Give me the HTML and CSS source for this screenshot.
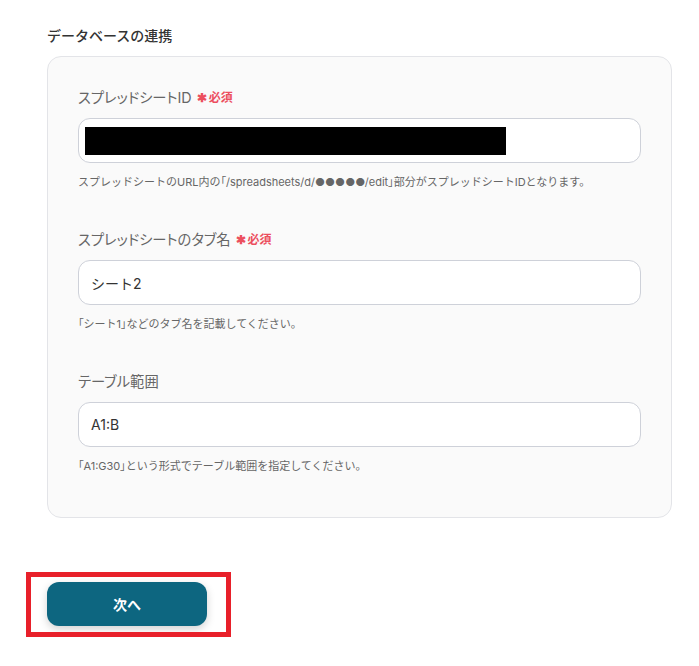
FILE: index.html
```html
<!DOCTYPE html>
<html lang="ja">
<head>
<meta charset="utf-8">
<link rel="stylesheet" href="styles.css">
</head>
<body>
<div class="page">
  <h2 class="section-title">データベースの連携</h2>
  <div class="card">
    <div class="field">
      <div class="label">スプレッドシートID<span class="req"><span class="star">✱</span>必須</span></div>
      <div class="input masked"><span class="mask"></span></div>
      <p class="help">スプレッドシートのURL内の<span class="br">「</span>/spreadsheets/d/●●●●●/edit<span class="br">」</span>部分がスプレッドシートIDとなります。</p>
    </div>
    <div class="field">
      <div class="label">スプレッドシートのタブ名<span class="req"><span class="star">✱</span>必須</span></div>
      <div class="input">シート2</div>
      <p class="help"><span class="br">「</span>シート1<span class="br">」</span>などのタブ名を記載してください。</p>
    </div>
    <div class="field">
      <div class="label">テーブル範囲</div>
      <div class="input">A1:B</div>
      <p class="help"><span class="br">「</span>A1:G30<span class="br">」</span>という形式でテーブル範囲を指定してください。</p>
    </div>
  </div>
  <div class="actions">
    <div class="btn-wrap">
      <button class="btn-next">次へ</button>
    </div>
  </div>
</div>
</body>
</html>
```
FILE: styles.css
```css
* { box-sizing: border-box; }
html, body { min-height: 100%; }
body {
  margin: 0;
  background: #ffffff;
  font-family: Inter, "Noto Sans CJK JP", sans-serif;
  color: #333333;
}
.page {
  padding: 26px 27px 60px 47px;
}
.section-title {
  margin: 0 0 10px 0;
  font-size: 14px;
  line-height: 20px;
  font-weight: 500;
  color: #333333;
}
.card {
  width: 625px;
  background: #fafafa;
  border: 1px solid #e3e4e8;
  border-radius: 14px;
  padding: 31px 30px 43px 30px;
  display: flex;
  flex-direction: column;
  gap: 40px;
}
.field {
  display: flex;
  flex-direction: column;
}
.label {
  font-size: 14.3px;
  line-height: 20px;
  color: #666666;
  font-weight: 400;
  font-feature-settings: "palt";
  display: flex;
  align-items: center;
  margin-bottom: 10px;
}
.req {
  color: #ec4f5e;
  font-size: 12px;
  font-weight: 700;
  margin-left: 5px;
  display: inline-flex;
  align-items: center;
}
.star {
  font-size: 12px;
  margin-right: 2px;
}
.input {
  height: 45px;
  background: #ffffff;
  border: 1px solid #ced1d9;
  border-radius: 12px;
  padding: 0 12px;
  display: flex;
  align-items: center;
  font-size: 14px;
  color: #333333;
}
.input.masked {
  padding: 0 6px;
}
.mask {
  display: block;
  width: 421px;
  height: 28px;
  background: #000000;
}
.help {
  margin: 11px 0 0 0;
  font-size: 11px;
  line-height: 16px;
  color: #666666;
}
.br {
  font-feature-settings: "palt";
}
.actions {
  margin-top: 64px;
  display: flex;
}
.btn-wrap {
  position: relative;
}
.btn-wrap::after {
  content: "";
  position: absolute;
  left: -21px;
  right: -24px;
  top: -10px;
  bottom: -11px;
  border: 5px solid #e8202a;
  pointer-events: none;
}
.btn-next {
  width: 160px;
  height: 44px;
  border: none;
  border-radius: 12px;
  background: #0d6680;
  color: #ffffff;
  font-family: Inter, "Noto Sans CJK JP", sans-serif;
  font-size: 14px;
  font-weight: 700;
  box-shadow: 0 3px 8px rgba(0, 0, 0, 0.18);
  display: block;
}
```
